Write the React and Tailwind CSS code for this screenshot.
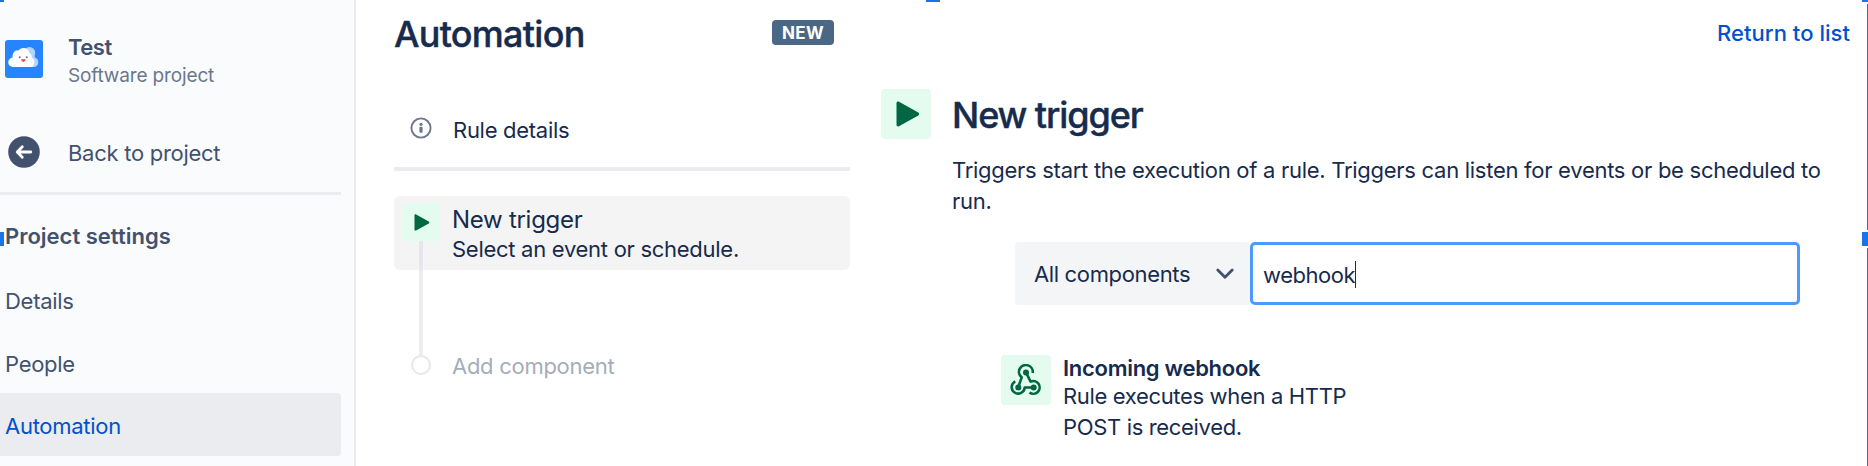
import React from "react";

function PlayIcon({ className }) {
  return (
    <svg viewBox="0 0 24 26" className={className} fill="#006644">
      <path d="M.5 2.2C.5.7 1.800.2 3 .8L22.300 11.600C23.500 12.300 23.500 13.700 22.300 14.400L3 25.200C1.800 25.800.5 25.300.5 23.800Z" />
    </svg>
  );
}

function ProjectAvatar() {
  return (
    <svg viewBox="0 0 38 38" className="mt-[8px] h-[38px] w-[38px] shrink-0">
      <rect width="38" height="38" rx="3" fill="#2684ff" />
      <path d="M19 27V13a6.300 6.300 0 0 1 10.800 4.500a5 5 0 0 1 0 9.500Z" fill="#b3d4ff" />
      <circle cx="24.500" cy="12.800" r="5.700" fill="#b3d4ff" />
      <path
        d="M8.300 27A4.600 4.600 0 0 1 7.600 17.600C7.200 12.500 10.500 9.600 13.600 10.400C15.500 6.800 23.300 6.600 24.600 13.200C26.500 14 27 16 26.800 17.800C30.500 18.500 30 27 26.500 27Z"
        fill="#fff"
      />
      <circle cx="14.800" cy="17.300" r="1" fill="#6b7280" />
      <circle cx="21.800" cy="17.300" r="1" fill="#6b7280" />
      <path d="M16 19.300H20.800Q20.300 22 18.400 22Q16.500 22 16 19.300Z" fill="#f0484e" />
    </svg>
  );
}

function WebhookIcon() {
  return (
    <svg viewBox="0 0 32 32" className="h-[32px] w-[32px]" fill="none" stroke="#006644" strokeWidth="2.600" strokeLinecap="butt" strokeLinejoin="round">
      <path d="M22.700 9A6.900 6.900 0 1 0 11.700 13.400L8.300 23" />
      <path d="M5.300 17.300A6.500 6.500 0 1 0 14.700 23.500H23.800" />
      <path d="M16 8.300L20.600 17.600A6.400 6.400 0 1 1 19.500 28.600" />
      <g fill="#006644" stroke="none">
        <circle cx="16" cy="8.600" r="3" />
        <circle cx="8.300" cy="23.400" r="3" />
        <circle cx="23.700" cy="23.400" r="3" />
      </g>
    </svg>
  );
}

function Sidebar() {
  return (
    <aside className="flex h-full w-[356px] shrink-0 flex-col border-r-2 border-[#e9eaed] bg-[#fafbfd] text-[22px] text-[#42526e]">
      <div className="mt-[32px] flex h-[54px] pl-[5px]">
        <ProjectAvatar />
        <div className="mt-px ml-[25px]">
          <div className="text-[22px] leading-[28px] font-semibold tracking-[-0.500px]">Test</div>
          <div className="mt-[2px] text-[19px] leading-[25px] tracking-[-0.150px] text-[#6b778c]">Software project</div>
        </div>
      </div>
      <div className="mt-[50px] flex h-[32px] pl-[8px]">
        <svg viewBox="0 0 32 32" className="h-[32px] w-[32px]">
          <circle cx="16" cy="16" r="15.800" fill="#42526e" />
          <path d="M22.800 16H10M14.300 10.800L9.200 16L14.300 21.200" fill="none" stroke="#fff" strokeWidth="2.800" strokeLinecap="round" strokeLinejoin="round" />
        </svg>
        <span className="mt-px ml-[28px] leading-[32px]">Back to project</span>
      </div>
      <div className="mt-[24px] h-[3px] w-[341px] bg-[#ebecf0]" />
      <div className="mt-[25px] mb-[15px] pl-[5px] leading-[32px] font-semibold tracking-normal">Project settings</div>
      <nav className="flex w-[341px] flex-col">
        <a className="h-[63px] pt-[4px] pl-[5px] leading-[60px]">Details</a>
        <a className="h-[63px] pt-[4px] pl-[5px] leading-[60px]">People</a>
        <a className="h-[63px] rounded-r-[4px] bg-[#ebecf0] pt-[3px] pl-[5px] leading-[60px] text-[#0052cc]">Automation</a>
      </nav>
    </aside>
  );
}

function RulePanel() {
  return (
    <section className="ml-[38px] flex w-[456px] shrink-0 flex-col">
      <div className="mt-[11px] flex h-[44px] justify-between pr-[16px]">
        <h1 className="text-[36px] leading-[46px] font-medium tracking-[-0.740px] [-webkit-text-stroke:0.4px]">Automation</h1>
        <span className="mt-[9px] flex h-[25px] w-[62px] items-center justify-center rounded-[4px] bg-[#4a6785] pt-px text-[17px] leading-[25px] font-bold tracking-[0.300px] text-white">NEW</span>
      </div>
      <div className="mt-[58px] flex h-[32px] pl-[16px]">
        <svg viewBox="0 0 22 22" className="mt-[4px] h-[22px] w-[22px]">
          <circle cx="11" cy="11" r="9.600" fill="none" stroke="#6b778c" strokeWidth="1.900" />
          <circle cx="11" cy="7.300" r="1.600" fill="#6b778c" />
          <rect x="9.400" y="9.800" width="3.200" height="6" rx="1" fill="#6b778c" />
        </svg>
        <span className="mt-px ml-[21px] leading-[32px]">Rule details</span>
      </div>
      <div className="mt-[22px] h-[4px] bg-[#ebecf0]" />
      <div className="mt-[25px] flex h-[74px] rounded-[6px] bg-[#f4f4f4] pl-[8px]">
        <div className="mt-[7px] flex w-[38px] flex-col items-center">
          <div className="flex h-[38px] w-[38px] items-center justify-center rounded-[4px] bg-[#e3fcef]">
            <PlayIcon className="ml-[2px] h-[17px] w-[16px]" />
          </div>
          <div className="w-[4px] flex-1 bg-[#e6e6ec]" />
        </div>
        <div className="ml-[12px] pt-[8px]">
          <div className="text-[24px] leading-[32px]">New trigger</div>
          <div className="mt-[-3px] leading-[32px]">Select an event or schedule.</div>
        </div>
      </div>
      <div className="flex">
        <div className="ml-[17px] flex w-[20px] flex-col items-center">
          <div className="h-[85px] w-[4px] bg-[#ebecf0]" />
          <div className="h-[20px] w-[20px] rounded-full border-2 border-[#e6e7ec] bg-white" />
        </div>
        <div className="mt-[80px] ml-[21px] leading-[32px] text-[#a5adba]">Add component</div>
      </div>
    </section>
  );
}

function TriggerPanel() {
  return (
    <section className="ml-[31px] flex flex-1 flex-col">
      <a className="mt-[17px] mr-[18px] self-end leading-[32px] font-medium tracking-[0.040px] text-[#0052cc]">Return to list</a>
      <div className="mt-[40px] flex">
        <div className="flex h-[50px] w-[50px] shrink-0 items-center justify-center rounded-[4px] bg-[#e3fcef]">
          <PlayIcon className="ml-[3px] h-[26px] w-[24px]" />
        </div>
        <div className="ml-[21px]">
          <h2 className="mt-[4px] text-[36px] leading-[44px] font-medium tracking-[-1.100px] [-webkit-text-stroke:0.4px]">New trigger</h2>
          <p className="mt-[18px] leading-[31px] whitespace-nowrap">
            Triggers start the execution of a rule. Triggers can listen for events or be scheduled to
            <br />
            run.
          </p>
        </div>
      </div>
      <div className="mt-[25px] ml-[134px] flex h-[63px]">
        <div className="flex w-[235px] items-center justify-between rounded-[4px] bg-[#f4f5f7] pr-[16px] pl-[19px]">
          <span className="leading-[32px] tracking-[-0.350px]">All components</span>
          <svg viewBox="0 0 18 12" className="h-[12px] w-[18px]" fill="none" stroke="#42526e" strokeWidth="2.800" strokeLinecap="round" strokeLinejoin="round">
            <path d="M1.800 2L9 9.300L16.200 2" />
          </svg>
        </div>
        <div className="flex w-[550px] items-center rounded-[5px] border-3 border-[#4c9aff] bg-white pl-[10px]">
          <span className="mt-[3px] leading-[32px] tracking-[-0.450px]">webhook</span>
          <span className="mt-px h-[27px] w-px bg-[#172b4d]" />
        </div>
      </div>
      <div className="mt-[50px] ml-[120px] flex">
        <div className="flex h-[50px] w-[50px] items-center justify-center rounded-[4px] bg-[#e3fcef]">
          <WebhookIcon />
        </div>
        <div className="mt-[-3px] ml-[12px]">
          <div className="leading-[32px] font-semibold">Incoming webhook</div>
          <p className="mt-[-3px] leading-[31px] tracking-[-0.340px] whitespace-nowrap">
            Rule executes when a HTTP
            <br />
            POST is received.
          </p>
        </div>
      </div>
    </section>
  );
}

function SelectionHandles() {
  return (
    <>
      <i className="absolute top-0 left-0 h-[2px] w-[4px] bg-[#1a73e8]" />
      <i className="absolute top-0 left-[926px] h-[2px] w-[14px] bg-[#1a73e8]" />
      <i className="absolute top-0 right-0 h-[2px] w-[6px] bg-[#1a73e8]" />
      <i className="absolute top-[232px] left-0 h-[14px] w-[4px] bg-[#1a73e8]" />
      <i className="absolute top-[232px] right-0 h-[14px] w-[6px] bg-[#1a73e8]" />
      <i className="absolute top-[4px] right-0 h-[226px] w-px bg-[#1a73e8]" />
      <i className="absolute top-[248px] right-0 h-[218px] w-px bg-[#1a73e8]" />
    </>
  );
}

export default function App() {
  return (
    <div className="relative flex h-[466px] w-[1868px] overflow-hidden bg-white font-['Inter',sans-serif] text-[22px] tracking-[-0.280px] text-[#172b4d]">
      <Sidebar />
      <RulePanel />
      <TriggerPanel />
      <SelectionHandles />
    </div>
  );
}
